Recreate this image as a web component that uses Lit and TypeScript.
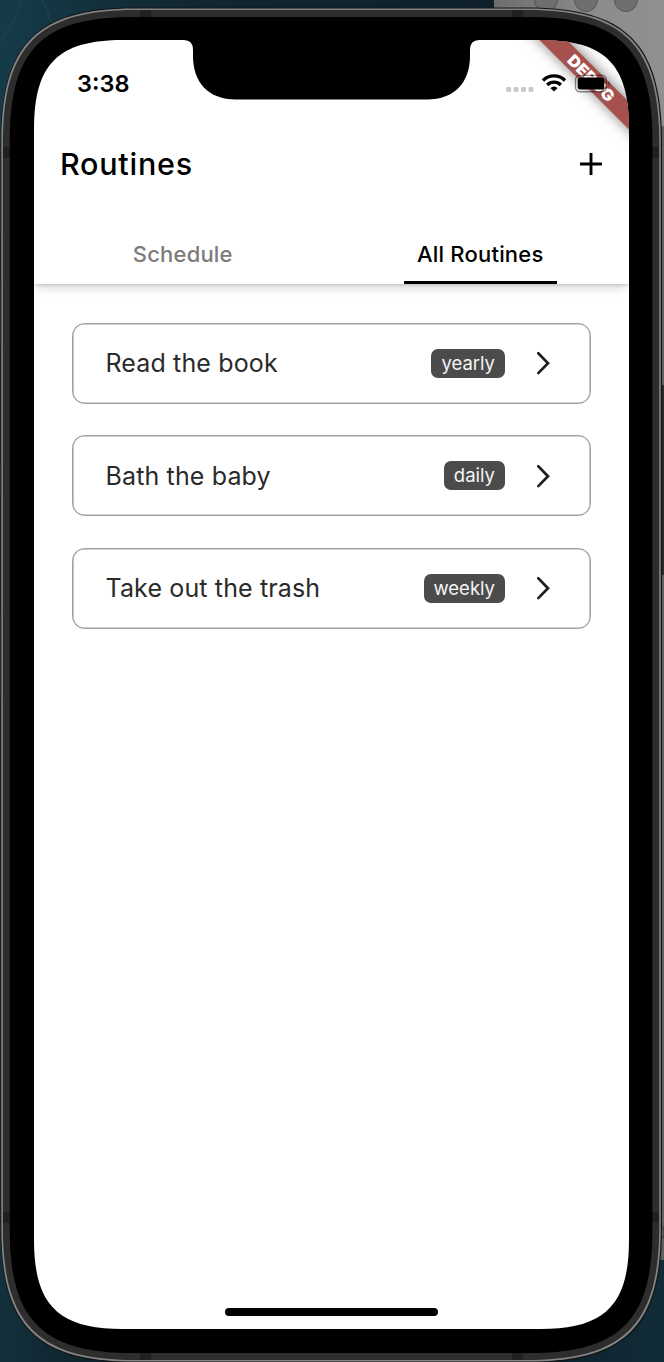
import { LitElement, html, svg, css } from "lit";
import { customElement, property } from "lit/decorators.js";

/** Rounded rectangle with continuous ("squircle") corners. */
function squircle(x0: number, y0: number, x1: number, y1: number, l: number, k = 0.73): string {
  const c = l * (1 - k);
  return `M${x0} ${y0 + l}C${x0} ${y0 + c} ${x0 + c} ${y0} ${x0 + l} ${y0}H${x1 - l}
    C${x1 - c} ${y0} ${x1} ${y0 + c} ${x1} ${y0 + l}V${y1 - l}
    C${x1} ${y1 - c} ${x1 - c} ${y1} ${x1 - l} ${y1}H${x0 + l}
    C${x0 + c} ${y1} ${x0} ${y1 - c} ${x0} ${y1 - l}Z`;
}

const SCREEN = squircle(34, 40, 629, 1329, 89);

@customElement("device-frame")
class DeviceFrame extends LitElement {
  static styles = css`
    :host { display: block; }
    svg { display: block; }
    .ribbon-text { font: 900 15.6px Inter, "Liberation Sans", sans-serif; fill: #fff; }
  `;

  render() {
    return html`<svg width="664" height="1362" viewBox="0 0 664 1362">
      <defs>
        <linearGradient id="sky" x1="0" y1="0" x2="1" y2="0">
          <stop offset="0" stop-color="#153b49" />
          <stop offset="0.3" stop-color="#10262f" />
          <stop offset="1" stop-color="#0c1d26" />
        </linearGradient>
        <linearGradient id="floor" x1="0" y1="0" x2="1" y2="0">
          <stop offset="0" stop-color="#13303c" />
          <stop offset="0.2" stop-color="#0b1d25" />
          <stop offset="0.8" stop-color="#0c212b" />
          <stop offset="1" stop-color="#112c38" />
        </linearGradient>
        <linearGradient id="panel" x1="0" y1="0" x2="1" y2="0">
          <stop offset="0" stop-color="#6c6e6d" />
          <stop offset="0.6" stop-color="#8b8d8c" />
          <stop offset="1" stop-color="#8f9190" />
        </linearGradient>
        <filter id="soft" x="-30%" y="-30%" width="160%" height="160%"><feGaussianBlur stdDeviation="7" /></filter>
        <clipPath id="glass"><path d=${SCREEN} /></clipPath>
      </defs>
      <rect width="664" height="700" fill="url(#sky)" />
      <rect y="700" width="664" height="662" fill="url(#floor)" />
      <path d="M22 0Q14 24 0 42M43 0L51 22" stroke="#1d4652" stroke-width="2" fill="none" opacity=".6" />
      <rect y="235" width="3" height="49" fill="#282b2d" />
      <rect y="347" width="3" height="117" fill="#282b2d" />
      <rect y="497" width="3" height="116" fill="#282b2d" />
      <rect x="494" width="170" height="140" fill="url(#panel)" />
      <rect x="655" y="126" width="9" height="1134" fill="#5f615f" />
      <rect x="655" y="385" width="9" height="190" fill="#2a2a28" />
      ${[546, 586, 626].map((x) => svg`<circle cx=${x} cy="0" r="11.5" fill="#6e706f" stroke="#555756" />`)}
      <path d="M661 1226l3 2v9l-3 2" stroke="#333" fill="none" />
      <path d=${squircle(0.6, 7.6, 662, 1363, 134)} fill="#151617" />
      <path d=${squircle(1.3, 8.4, 660.8, 1361.6, 133)} fill="#858585" />
      <path d=${squircle(2.9, 10, 659.2, 1360, 132)} fill="#2d2d2d" />
      <g fill="#202020">
        <rect x="140" y="10" width="11" height="8" />
        <rect x="512" y="10" width="11" height="8" />
        <rect x="140" y="1352" width="11" height="8" />
        <rect x="512" y="1352" width="11" height="8" />
        <rect x="3" y="147" width="8" height="11" />
        <rect x="651" y="147" width="8" height="11" />
        <rect x="3" y="1212" width="8" height="11" />
        <rect x="651" y="1212" width="8" height="11" />
      </g>
      <path d=${squircle(9.8, 17, 652.4, 1353, 122)} fill="#000" />
      <path d=${SCREEN} fill="#fff" />
      <g clip-path="url(#glass)">
        <path d="M520 20L548 20L650 122L650 150Z" fill="#000" opacity=".5" filter="url(#soft)" />
        <path d="M520 20.5L547.5 20.5L650 123L650 150.5Z" fill="#a5514e" />
        <text class="ribbon-text" transform="translate(591.2 78.2) rotate(45)" y="5.6" text-anchor="middle"
          textLength="59" lengthAdjust="spacingAndGlyphs">DEBUG</text>
      </g>
      <path d="M180 39V40H184Q193 40 193 50V56C193 82 208 99.500 236 99.500H427C455 99.500 470 82 470 56V50Q470 40 479 40V39Z" fill="#000" />
    </svg>`;
  }
}

@customElement("status-bar")
class StatusBar extends LitElement {
  static styles = css`
    :host { display: flex; justify-content: space-between; align-items: flex-start; height: 92px; padding: 28px 17px 0 43px; box-sizing: border-box; }
    .time { font-size: 23.5px; line-height: 32px; font-weight: 600; letter-spacing: 0; color: #000; }
    .signals { display: block; }
  `;

  render() {
    return html`
      <span class="time">3:38</span>
      <svg class="signals" width="108" height="32" viewBox="504 68 108 32">
        <g fill="#c9c9c9">
          ${[506.2, 513.6, 521, 528.5].map((x) => svg`<rect x=${x} y="87" width="5" height="5" rx="1.400" />`)}
        </g>
        <g fill="none" stroke="#000" stroke-width="3.300">
          <path d="M543 80.500A15.500 15.500 0 0 1 565 80.500" />
          <path d="M547.200 85A9.600 9.600 0 0 1 560.800 85" />
        </g>
        <path d="M554 91.600L550.300 87.900Q554 84.900 557.700 87.900Z" />
        <rect x="575.500" y="75.400" width="30.800" height="16.400" rx="4.500" fill="none" stroke="#000" stroke-opacity=".45" stroke-width="1.400" />
        <rect x="577.700" y="77.600" width="26.600" height="12" rx="2.500" />
        <path d="M608.500 80.800Q611.300 83.400 608.500 86.400Z" fill="#000" fill-opacity=".5" />
      </svg>
    `;
  }
}

@customElement("routine-card")
class RoutineCard extends LitElement {
  @property() name = "";
  @property() frequency = "";

  static styles = css`
    :host { display: flex; align-items: center; height: 81px; box-sizing: border-box; border: 1px solid #a0a0a0; box-shadow: inset 0 0 0 0.6px #a0a0a0; border-radius: 12.5px; padding: 0 38px 0 32.500px; background: #fff; }
    .name { flex: 1; font-size: 25px; line-height: 32px; letter-spacing: 0.14px; color: #2a2a2a; white-space: nowrap; }
    .chip { background: #4b4b4b; color: #f5f5f5; border-radius: 7px; height: 29px; line-height: 29px; padding: 0 10px; font-size: 18.5px; letter-spacing: 0; white-space: nowrap; }
    .chevron { display: block; margin-left: 29px; }
  `;

  render() {
    return html`
      <span class="name">${this.name}</span>
      <span class="chip">${this.frequency}</span>
      <svg class="chevron" width="18" height="26" viewBox="0 0 18 26">
        <path d="M4.300 3.300L14 13.200L4.300 23.100" fill="none" stroke="#1f1f1f" stroke-width="2.700" stroke-linecap="round" />
      </svg>
    `;
  }
}

@customElement("app-root")
class AppRoot extends LitElement {
  static styles = css`
    :host { display: grid; width: 664px; height: 1362px; overflow: hidden; font-family: Inter, "Liberation Sans", sans-serif; }
    device-frame, .screen { grid-area: 1 / 1; }
    .screen { z-index: 1; display: flex; flex-direction: column; margin: 40px 35px 33px 34px; }
    .title-bar { display: flex; align-items: center; justify-content: space-between; height: 64px; padding: 0 26px; }
    .title { margin: 0; font-size: 30.5px; line-height: 40px; font-weight: 500; letter-spacing: 0.75px; color: #000; }
    .tabs { display: grid; grid-template-columns: 1fr 1fr; height: 55px; padding-top: 33px; box-shadow: 0 8px 8px -3px rgba(0, 0, 0, 0.13), 0 1px 3px rgba(0, 0, 0, 0.16); clip-path: inset(0 0 -24px 0); }
    .tab { display: flex; justify-content: center; font-size: 22px; line-height: 50px; font-weight: 500; letter-spacing: 0.2px; color: #7c7c7c; }
    .tab-label { height: 52px; padding: 0 13.500px; }
    .active { color: #000; border-bottom: 3px solid #000; }
    .list { display: flex; flex-direction: column; gap: 31.700px; padding: 38.500px 38px 0; flex: 1; }
    .home { align-self: center; width: 213px; height: 8px; border-radius: 4px; background: #000; margin: 0 0 13px 0; }
  `;

  private routines = [
    { name: "Read the book", frequency: "yearly" },
    { name: "Bath the baby", frequency: "daily" },
    { name: "Take out the trash", frequency: "weekly" },
  ];

  render() {
    return html`
      <device-frame></device-frame>
      <div class="screen">
        <status-bar></status-bar>
        <header class="title-bar">
          <h1 class="title">Routines</h1>
          <svg width="24" height="24" viewBox="0 0 24 24">
            <path d="M12 1V23M1 12H23" stroke="#000" stroke-width="2.900" />
          </svg>
        </header>
        <nav class="tabs">
          <div class="tab"><span class="tab-label">Schedule</span></div>
          <div class="tab"><span class="tab-label active">All Routines</span></div>
        </nav>
        <main class="list">
          ${this.routines.map((r) => html`<routine-card .name=${r.name} .frequency=${r.frequency}></routine-card>`)}
        </main>
        <div class="home"></div>
      </div>
    `;
  }
}
